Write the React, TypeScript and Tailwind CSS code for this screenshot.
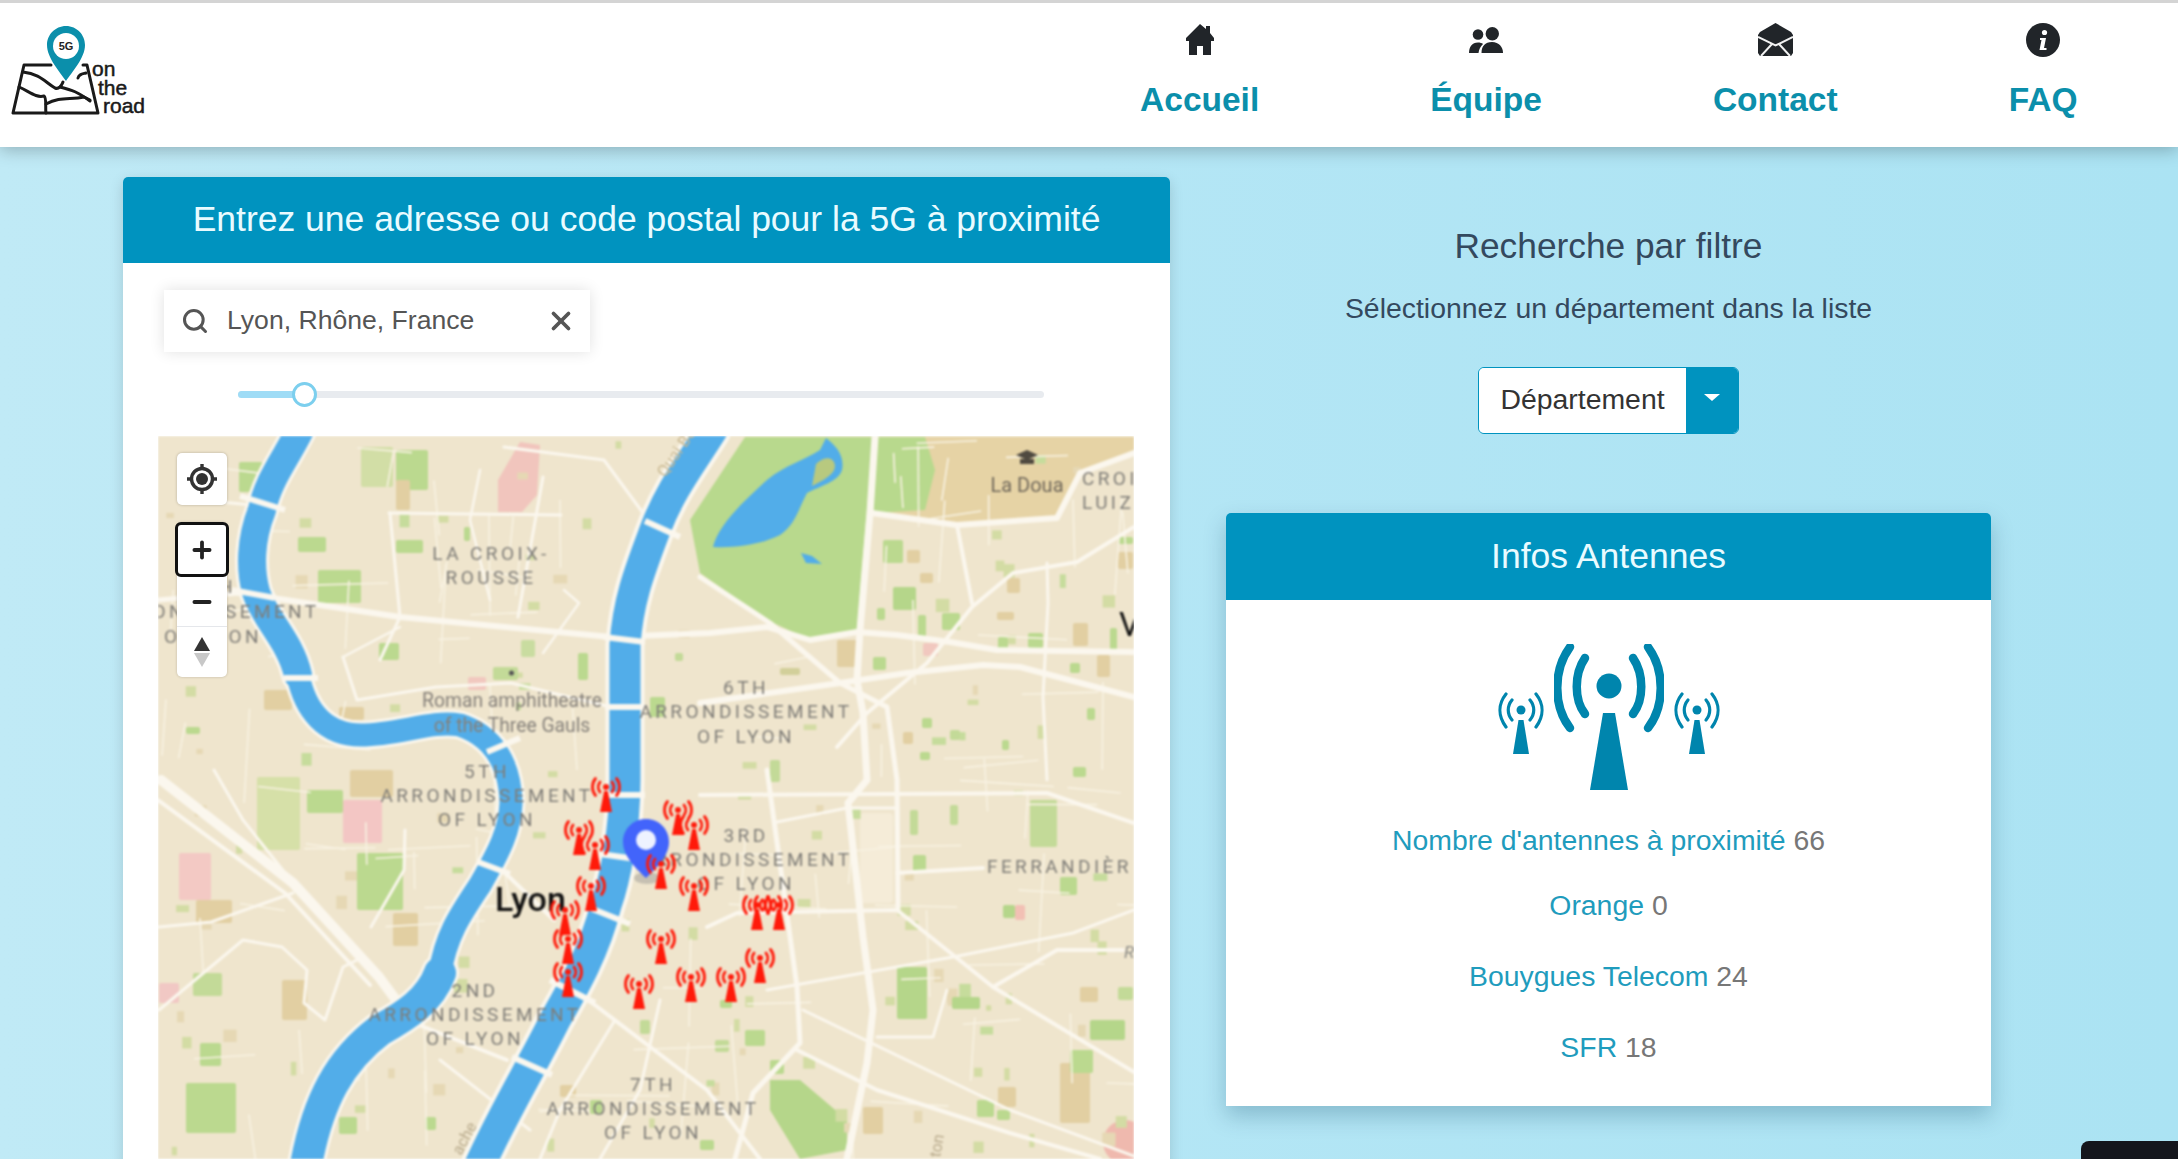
import React from 'react';
import { Minus, Plus, Search, X } from 'lucide-react';

const HomeIcon = () => (
  <svg viewBox="0 0 28 31" className="w-[28px] h-[31px]" fill="#212529">
    <path d="M14 0 L20 5 V2 H24 V9 L28 14 V17 H25 V31 H17 V22 H11 V31 H3 V17 H0 V14 Z" />
  </svg>
);

const UsersIcon = () => (
  <svg viewBox="0 0 34 26" className="w-[34px] h-[26px]" fill="#212529">
    <circle cx="23.3" cy="6.7" r="6.7" />
    <circle cx="9" cy="7.5" r="5.3" />
    <path d="M12.5 26 C12.5 19 16 15 23 15 C30 15 34 20 34 26 Z" />
    <path d="M0 26 C0 20 3 15.5 9 15.5 C11 15.5 13 16 14 17 C11.5 19.5 10 22 9.5 26 Z" />
  </svg>
);

const EnvelopeIcon = () => (
  <svg viewBox="0 0 35 33" className="w-[35px] h-[33px]">
    <path d="M17.5 0 L33 9 L35 12 V30 L33 33 H2 L0 30 V12 L2 9 Z" fill="#212529" />
    <path d="M0 14 L17.5 22.5 L35 14 M3 33 L14 21 M32 33 L21 21" fill="none" stroke="#f2f2f2" strokeWidth="2" />
  </svg>
);

const InfoIcon = () => (
  <svg viewBox="0 0 34 34" className="w-[34px] h-[34px]">
    <circle cx="17" cy="17" r="17" fill="#212529" />
    <circle cx="18.5" cy="9.5" r="2.6" fill="#fff" />
    <path d="M14 15 H20 L18 25 H20.5 V27 H13.5 L15.5 17 H14 Z" fill="#fff" />
  </svg>
);

const navItems = [
  { label: 'Accueil', icon: <HomeIcon /> },
  { label: 'Équipe', icon: <UsersIcon /> },
  { label: 'Contact', icon: <EnvelopeIcon /> },
  { label: 'FAQ', icon: <InfoIcon /> },
];

const counts = [
  { label: "Nombre d'antennes à proximité", value: 66, className: 'mt-[30px]' },
  { label: 'Orange', value: 0, className: 'mt-[25px]' },
  { label: 'Bouygues Telecom', value: 24, className: 'mt-[31px]' },
  { label: 'SFR', value: 18, className: 'mt-[31px]' },
];

// map data, x/y are page pixels (see the viewBox on the svg)
const roads: [string, number][] = [
  ['M239 593 L400 617 L611 637 L710 633 L767 627 L810 640 L857 632 L897 635 L950 642 L997 650 L1134 652', 6],
  ['M700 703 L840 683 L907 673 L983 665 L1020 667 L1134 697', 6],
  ['M875 437 L870 513 L860 630 L857 680 L863 713 L867 780 L848 803 L863 937 L873 1010 L867 1063 L847 1159', 7],
  ['M872 513 L957 525 L1057 518 L1080 473 L1134 453', 6],
  ['M957 525 L972 603', 4],
  ['M1134 527 L1077 562 L1013 573 L972 607 L927 663 L867 713 L837 747', 4],
  ['M1047 563 L1048 603 L1043 697 L1047 780', 3],
  ['M700 577 L770 623 L840 683 L887 707 L897 780 L898 910', 5],
  ['M700 795 L1047 793 L1134 823', 4],
  ['M897 873 L983 868', 4],
  ['M707 927 L737 913 L897 910 L993 987 L1134 1072', 4],
  ['M767 770 L797 987 L800 1043 L753 1093 L735 1159', 5],
  ['M767 990 L953 957 L1073 933 L1134 910', 3],
  ['M993 987 L1057 950 L1123 950', 4],
  ['M797 1050 L877 1090 L1010 1133 L1100 1159', 4],
  ['M803 1010 L1010 1110 L1134 1156', 3],
  ['M947 990 L933 1037 L877 1037', 3],
  ['M777 822 L847 808 L897 808', 3],
  ['M161 780 L293 883 L379 977 L396 1000', 10],
  ['M158 800 L285 893 L370 985', 4],
  ['M159 927 L211 922 L293 893', 3],
  ['M159 1010 L243 940 L282 947 L307 970 L304 1003 L325 1020 L343 967 L357 960', 3],
  ['M371 927 L404 870 L405 830', 3],
  ['M214 770 L243 820 L293 883', 3],
  ['M414 1023 L507 1060', 4],
  ['M504 872 L554 920', 4],
  ['M579 993 L707 1090 L760 1159', 4],
  ['M504 447 L604 460 L643 513', 3],
  ['M389 513 L561 515', 3],
  ['M390 513 L400 617 L380 660', 3],
  ['M543 477 L518 617', 3],
  ['M480 470 L470 520 L490 600', 2.5],
  ['M343 657 L400 627', 2.5],
  ['M343 657 L357 700 L436 687 L511 683 L611 707', 3],
  ['M564 590 L579 603 L543 653', 2.5],
  ['M158 600 L239 593', 5],
  ['M200 500 L252 505', 3],
  ['M660 1000 L640 1090 L600 1159', 3],
  ['M615 1020 L560 1110 L540 1159', 3],
  ['M440 1060 L530 1130', 3],
];

// faint street grid and small blocks, same result on every render
const hash = (n: number) => {
  const v = Math.sin(n * 127.1) * 43758.5453;
  return v - Math.floor(v);
};

const inWater = (x: number, y: number) => {
  if (x > 700 && x < 880 && y < 640) return true;
  const rhone = y < 640 ? 712 - (y - 430) * 0.42 : y < 800 ? 625 : 625 - (y - 800) * 0.4;
  return Math.abs(x - rhone) < 35;
};

const streets = Array.from({ length: 150 }, (_, i) => {
  const x = 160 + hash(i + 1) * 970;
  const y = 440 + hash(i + 500) * 715;
  const len = 30 + hash(i + 900) * 70;
  const flat = i % 2 === 0;
  const tilt = (hash(i + 1300) - 0.5) * 16;
  return { x, y, x2: flat ? x + len : x + tilt, y2: flat ? y + tilt : y + len };
}).filter((s) => !inWater(s.x, s.y) && !inWater(s.x2, s.y2));

const blocks = Array.from({ length: 120 }, (_, i) => {
  const x = 160 + hash(i + 2000) * 970;
  const y = 440 + hash(i + 2500) * 715;
  const tint = hash(i + 3000);
  return {
    x,
    y,
    w: 5 + hash(i + 3500) * 9,
    h: 5 + hash(i + 4000) * 9,
    fill: tint < 0.5 ? '#d3dca4' : tint < 0.85 ? '#e6d8b4' : '#c6dc9c',
  };
}).filter((b) => !inWater(b.x, b.y));

// [x, y, w, h, fill]
const patches: [number, number, number, number, string][] = [
  [239, 462, 24, 30, '#bbd98f'], [361, 447, 32, 40, '#d2dea6'], [396, 450, 32, 40, '#bbd98f'], [396, 480, 14, 30, '#e2cfa2'],
  [298, 537, 28, 15, '#bbd98f'], [396, 540, 27, 13, '#bbd98f'], [318, 570, 43, 33, '#bbd98f'], [379, 643, 20, 17, '#bbd98f'],
  [464, 527, 6, 14, '#bbd98f'], [521, 640, 14, 17, '#c9dca0'], [578, 653, 10, 27, '#bbd98f'], [493, 667, 25, 13, '#c3da98'],
  [468, 677, 18, 13, '#f1c8bf'], [650, 697, 15, 20, '#bbd98f'], [675, 653, 8, 8, '#c3da98'], [339, 707, 25, 13, '#e2cfa2'],
  [264, 690, 28, 20, '#e2cfa2'], [186, 727, 14, 7, '#bbd98f'], [257, 777, 43, 73, '#d6e0a8'], [307, 790, 36, 23, '#bbd98f'],
  [343, 800, 39, 43, '#f3c6c4'], [357, 853, 46, 57, '#bbd98f'], [350, 770, 43, 27, '#e2cfa2'], [179, 853, 32, 47, '#f3c9c4'],
  [196, 900, 36, 23, '#e2cfa2'], [393, 913, 25, 33, '#e2cfa2'], [282, 980, 25, 40, '#e2cfa2'], [193, 973, 29, 23, '#c3da98'],
  [200, 1043, 21, 23, '#bbd98f'], [186, 1083, 50, 50, '#bbd98f'], [339, 1117, 18, 17, '#bbd98f'], [425, 1117, 11, 13, '#bbd98f'],
  [159, 983, 20, 20, '#f1c8c4'], [897, 967, 30, 52, '#b5d68a'], [977, 1100, 17, 17, '#bbd98f'], [997, 1110, 13, 10, '#bbd98f'],
  [998, 1087, 18, 20, '#e2cfa2'], [1060, 1063, 30, 60, '#e2cfa2'], [1090, 1020, 35, 20, '#b5d68a'], [1070, 1050, 23, 23, '#bbd98f'],
  [1030, 800, 27, 47, '#c3da98'], [913, 855, 13, 18, '#bbd98f'], [1060, 877, 17, 18, '#bbd98f'], [1003, 905, 12, 13, '#b5d68a'],
  [1015, 905, 10, 15, '#f2c0b4'], [952, 997, 28, 12, '#b5d68a'], [1118, 987, 15, 13, '#c3da98'], [1080, 987, 18, 15, '#e2cfa2'],
  [863, 1107, 20, 27, '#e2cfa2'], [883, 540, 20, 23, '#bbd98f'], [893, 587, 23, 23, '#b5d68a'], [907, 550, 13, 13, '#e2cfa2'],
  [920, 573, 13, 10, '#e2cfa2'], [877, 608, 8, 12, '#bbd98f'], [918, 615, 8, 22, '#bbd98f'], [942, 613, 18, 17, '#bbd98f'],
  [998, 637, 10, 12, '#bbd98f'], [1028, 633, 15, 15, '#bbd98f'], [1073, 623, 15, 23, '#e2cfa2'], [1110, 628, 7, 22, '#bbd98f'],
  [1097, 655, 13, 22, '#e2cfa2'], [1070, 663, 10, 10, '#bbd98f'], [1118, 537, 15, 7, '#bbd98f'], [1118, 552, 15, 17, '#e2cfa2'],
  [837, 640, 20, 27, '#e2cfa2'], [873, 657, 13, 13, '#bbd98f'], [780, 668, 20, 7, '#d2cf9a'], [922, 718, 10, 10, '#bbd98f'],
  [903, 732, 10, 12, '#e2cfa2'], [950, 730, 10, 10, '#c3da98'], [1002, 740, 7, 10, '#bbd98f'], [1087, 708, 8, 12, '#bbd98f'],
  [920, 752, 10, 8, '#bbd98f'], [1073, 767, 13, 10, '#bbd98f'], [923, 643, 15, 13, '#f1c8bf'], [1007, 578, 13, 15, '#e2cfa2'],
  [997, 612, 17, 8, '#e2cfa2'], [770, 760, 10, 22, '#c3da98'], [910, 810, 8, 25, '#c3da98'], [950, 805, 8, 20, '#c3da98'],
  [745, 1030, 20, 16, '#bbd98f'], [770, 1060, 14, 14, '#bbd98f'], [715, 1040, 14, 12, '#c3da98'], [560, 1085, 16, 12, '#e2cfa2'],
  [590, 1100, 12, 14, '#bbd98f'], [640, 1020, 10, 14, '#c3da98'], [720, 1000, 12, 8, '#bbd98f'], [700, 1140, 14, 10, '#bbd98f'],
];

const antennas = [
  [606, 787], [678, 810], [694, 825], [579, 830], [595, 845], [694, 886], [591, 886], [565, 910], [757, 905],
  [779, 905], [568, 939], [661, 939], [760, 958], [568, 972], [691, 977], [731, 977], [639, 984],
];

// text centred on x: [text, x, y]
const districtLabels: [string, number, number][] = [
  ['LA CROIX-', 491, 560], ['ROUSSE', 491, 584],
  ['9TH', 213, 593], ['ARRONDISSEMENT', 213, 618], ['OF LYON', 213, 643],
  ['6TH', 746, 694], ['ARRONDISSEMENT', 746, 718], ['OF LYON', 746, 743],
  ['5TH', 487, 778], ['ARRONDISSEMENT', 487, 802], ['OF LYON', 487, 826],
  ['3RD', 746, 842], ['ARRONDISSEMENT', 746, 866], ['OF LYON', 746, 890],
  ['2ND', 475, 997], ['ARRONDISSEMENT', 475, 1021], ['OF LYON', 475, 1045],
  ['7TH', 653, 1091], ['ARRONDISSEMENT', 653, 1115], ['OF LYON', 653, 1139],
];

const Antenna = ({ x, y, tower = true }: { x: number; y: number; tower?: boolean }) => (
  <g transform={`translate(${x} ${y})`} fill="none" stroke="#ff1a0a" strokeWidth="2.8" strokeLinecap="round">
    {tower && <circle r="3" fill="#ff1a0a" stroke="none" />}
    <path d="M-6 -5 A8 8 0 0 0 -6 5 M6 -5 A8 8 0 0 1 6 5" />
    <path d="M-10.5 -8.5 A13.5 13.5 0 0 0 -10.5 8.5 M10.5 -8.5 A13.5 13.5 0 0 1 10.5 8.5" />
    {tower && <path d="M-1.8 4 L1.8 4 L6 25 L-6 25 Z" fill="#ff1a0a" stroke="none" />}
  </g>
);

const saoneTop = 'M300 430 C285 460 268 480 262 510 C250 540 250 570 256 592 C265 620 290 640 298 675';
const saoneMid = 'M298 675 C305 710 325 735 361 735 C400 735 430 720 460 725 C490 735 510 760 511 803 C510 830 500 850 480 885 C460 915 446 935 440 973';
const saoneLow = 'M440 973 C430 1000 407 1015 380 1030 C340 1060 318 1100 306 1165';
const rhone = 'M712 430 C690 465 670 490 655 530 C640 570 628 600 625 645 L625 780 C625 830 615 880 606 905 C595 950 575 985 555 1020 C530 1070 505 1110 480 1165';

const CityMap = () => (
  <svg viewBox="158 436 976 723" className="block w-full h-full blur-[0.8px]" fontFamily="Roboto, sans-serif">
    <rect x="158" y="436" width="976" height="723" fill="#efe5cd" />
    {/* parks */}
    <path d="M745 437 L873 437 L857 630 L810 640 L767 620 L700 573 L690 520 Z" fill="#b8d98d" />
    <path d="M877 437 L1134 437 L1134 450 L1080 473 L1057 517 L957 525 L873 513 Z" fill="#e6d3a5" />
    <path d="M878 437 L925 437 L935 470 L925 510 L873 513 Z" fill="#b8d98d" />
    <path d="M498 480 L520 442 L540 445 L537 495 L522 512 L498 512 Z" fill="#f1c5bd" />
    <path d="M770 1080 L800 1080 L847 1120 L847 1150 L800 1159 L770 1110 Z" fill="#b5d68a" />
    <circle cx="1125" cy="1142" r="22" fill="#efb9ae" />
    <rect x="860" y="813" width="33" height="90" rx="4" fill="#f5ecd8" />
    {blocks.map((b, i) => (
      <rect key={i} x={b.x} y={b.y} width={b.w} height={b.h} fill={b.fill} />
    ))}
    {patches.map(([x, y, w, h, fill], i) => (
      <rect key={i} x={x} y={y} width={w} height={h} rx="2" fill={fill} />
    ))}
    {streets.map((s, i) => (
      <line key={i} x1={s.x} y1={s.y} x2={s.x2} y2={s.y2} stroke="#f8f2e2" strokeWidth="1.6" />
    ))}
    {roads.map(([d, w], i) => (
      <path key={i} d={d} fill="none" stroke="#fbf7ee" strokeWidth={w} strokeLinejoin="round" strokeLinecap="round" />
    ))}
    {/* lake */}
    <path d="M713 547 C718 525 745 500 767 480 C785 465 805 460 820 450 L826 438 C835 445 845 455 842 470 C838 482 820 486 807 493 C798 510 795 525 780 535 C760 545 735 548 713 547 Z" fill="#52ade9" />
    <path d="M816 464 C824 456 834 456 835 466 C835 474 824 480 812 486 Z" fill="#b8c97f" />
    <path d="M801 553 L812 556 L822 564 L806 563 Z" fill="#52ade9" />
    {/* Saône and Rhône */}
    <g fill="none" strokeLinejoin="round" strokeLinecap="round">
      <path d={saoneTop} stroke="#fbf7ee" strokeWidth="34" />
      <path d={saoneMid} stroke="#fbf7ee" strokeWidth="29" />
      <path d={saoneLow} stroke="#fbf7ee" strokeWidth="38" />
      <path d={rhone} stroke="#fbf7ee" strokeWidth="39" />
      <path d={saoneTop} stroke="#52ade9" strokeWidth="28" />
      <path d={saoneMid} stroke="#52ade9" strokeWidth="23" />
      <path d={saoneLow} stroke="#52ade9" strokeWidth="32" />
      <path d={rhone} stroke="#52ade9" strokeWidth="31" />
    </g>
    {/* bridges */}
    <path
      d="M240 496 L285 510 M232 590 L275 598 M284 678 L318 678 M487 752 L520 738 M478 862 L510 874 M645 521 L680 537 M604 637 L645 642 M605 707 L645 707 M605 795 L645 795 M600 854 L636 859 M590 908 L630 924 M550 980 L595 1003 M512 1057 L552 1075"
      fill="none"
      stroke="#fbf7ee"
      strokeWidth="6"
    />
    {/* labels */}
    <g fill="#7f7d78" fontSize="19" letterSpacing="3.4" textAnchor="middle">
      {districtLabels.map(([t, x, y], i) => (
        <text key={i} x={x} y={y}>{t}</text>
      ))}
    </g>
    <text x="987" y="873" fill="#7f7d78" fontSize="19" letterSpacing="3.4">FERRANDIÈR</text>
    <text x="1082" y="485" fill="#7f7d78" fontSize="19" letterSpacing="3.4">CROI</text>
    <text x="1082" y="509" fill="#7f7d78" fontSize="19" letterSpacing="3.4">LUIZ</text>
    <g fill="#85807a" fontSize="19.3" textAnchor="middle">
      <text x="512" y="707">Roman amphitheatre</text>
      <text x="512" y="732">of the Three Gauls</text>
    </g>
    <text x="1027" y="492" fill="#6f675a" fontSize="20" textAnchor="middle">La Doua</text>
    <path d="M1027 450 L1038 455 L1027 460 L1016 455 Z M1020 459 L1034 459 L1034 464 L1020 464 Z" fill="#4f4a40" />
    <circle cx="511.5" cy="673" r="2.5" fill="#555" />
    <text x="1119" y="636" fill="#111" fontSize="33">V</text>
    <text x="495" y="911" fill="#111" fontSize="34" fontWeight="500">Lyon</text>
    <text x="1124" y="958" fill="#8a8a86" fontSize="17" fontStyle="italic">R</text>
    <text x="665" y="478" fill="#c7b68e" fontSize="16" transform="rotate(-55 665 478)">Quai Bel</text>
    <text x="461" y="1156" fill="#b9ab8d" fontSize="16" transform="rotate(-62 461 1156)">ache</text>
    <text x="940" y="1158" fill="#b9ab8d" fontSize="16" transform="rotate(-80 940 1158)">ton</text>
    {/* marker */}
    <ellipse cx="647" cy="878" rx="13" ry="6" fill="#8a8a8a" opacity="0.4" />
    <path d="M646 819 C633 819 623 829 623 842 C623 858 640 872 646 878 C652 872 669 858 669 842 C669 829 659 819 646 819 Z" fill="#4264fb" />
    <circle cx="646" cy="840" r="10" fill="#eef2ff" />
    {antennas.map(([x, y], i) => (
      <Antenna key={i} x={x} y={y} />
    ))}
    <Antenna x={768} y={905} tower={false} />
    <Antenna x={661} y={864} />
  </svg>
);

const MapControls = () => (
  <div className="absolute left-[19px] top-[17px] flex flex-col items-center w-[50px] text-[#222]">
    <div className="w-[50px] h-[52px] bg-white rounded-[5px] shadow-[0_0_3px_rgba(0,0,0,0.25)] flex items-center justify-center">
      <svg viewBox="0 0 32 32" className="w-[32px] h-[32px]" fill="none" stroke="#333" strokeWidth="3.4">
        <circle cx="16" cy="16" r="10.5" />
        <circle cx="16" cy="16" r="6" fill="#333" stroke="none" />
        <path d="M16 1 V5 M16 27 V31 M1 16 H5 M27 16 H31" />
      </svg>
    </div>
    <div className="mt-[17px] w-[50px] bg-white rounded-[5px] shadow-[0_0_3px_rgba(0,0,0,0.2)] flex flex-col items-center">
      <div className="w-[54px] h-[55px] bg-white border-[3px] border-[#111] rounded-[6px] flex items-center justify-center">
        <Plus className="w-[26px] h-[26px]" strokeWidth={3.5} />
      </div>
      <div className="w-full h-[50px] border-b border-gray-200 flex items-center justify-center">
        <Minus className="w-[26px] h-[26px]" strokeWidth={3.5} />
      </div>
      <div className="h-[50px] flex items-center justify-center">
        <svg viewBox="0 0 20 34" className="w-[20px] h-[38px]">
          <path d="M10 2 L18 16 H2 Z" fill="#333" />
          <path d="M10 32 L18 18 H2 Z" fill="#c8c8c8" />
        </svg>
      </div>
    </div>
  </div>
);

const Logo = () => (
  <svg viewBox="0 3 160 125" className="w-[160px] h-[125px]" fontFamily="'Liberation Sans', sans-serif">
    <g fill="none" stroke="#1a1a1a" strokeWidth="3" strokeLinejoin="round" strokeLinecap="round">
      <path d="M51 65 H24 L13 113 H98 L87 65 H83" />
      <path d="M78 78 C79 74 82 74 86 73" />
      <path d="M23 72 C40 74 45 82 55 88 C60 90 62 84 63 82" />
      <path d="M19 87 C30 92 36 98 44 96 C47 98 45 108 46 113" />
      <path d="M46 104 C60 96 70 100 84 97 L90 100" />
      <path d="M60 87 C72 90 78 92 90 101" />
    </g>
    <path d="M66 26 C55 26 47 35 47 45 C47 58 60 72 66 81 C72 72 85 58 85 45 C85 35 77 26 66 26 Z" fill="#0b8fab" />
    <circle cx="66" cy="46" r="13" fill="#fff" />
    <text x="66" y="50" fontSize="11" fontWeight="700" textAnchor="middle" fill="#222">5G</text>
    <g fontSize="21" fill="#1a1a1a" stroke="#1a1a1a" strokeWidth="0.5">
      <text x="92" y="76">on</text>
      <text x="98" y="95">the</text>
      <text x="103" y="113">road</text>
    </g>
  </svg>
);

const TowerIcon = ({ big }: { big?: boolean }) =>
  big ? (
    <svg viewBox="0 0 110 146" className="w-[110px] h-[146px]" fill="none" stroke="#0085ad" strokeLinecap="round">
      <circle cx="55" cy="42" r="12.5" fill="#0085ad" stroke="none" />
      <path d="M31 14 C20 30 20 56 31 70 M79 14 C90 30 90 56 79 70" strokeWidth="8.5" />
      <path d="M16 3 C-1 26 -1 62 16 84 M94 3 C111 26 111 62 94 84" strokeWidth="8.5" />
      <path d="M49 69 H61 L74 146 H36 Z" fill="#0085ad" stroke="none" />
    </svg>
  ) : (
    <svg viewBox="0 0 48 62" className="w-[48px] h-[62px]" fill="none" stroke="#0085ad" strokeLinecap="round">
      <circle cx="24" cy="18" r="4.5" fill="#0085ad" stroke="none" />
      <path d="M15 8 C10 14 10 22 15 28 M33 8 C38 14 38 22 33 28" strokeWidth="3.2" />
      <path d="M9 2 C1 12 1 24 9 35 M39 2 C47 12 47 24 39 35" strokeWidth="3.2" />
      <path d="M21.5 28 H26.5 L32 62 H16 Z" fill="#0085ad" stroke="none" />
    </svg>
  );

export default function App() {
  return (
    <div className="relative h-[1159px] overflow-hidden bg-gradient-to-r from-[#c0eaf6] via-[#b4e6f5] to-[#abe3f3] font-['Liberation_Sans',Arial,sans-serif]">
      <header className="relative z-10 h-[147px] bg-white border-t-[3px] border-[#d4d4d4] shadow-[0_3px_16px_rgba(0,0,0,0.25)] flex items-start justify-between">
        <Logo />
        <nav className="flex pr-[15px]">
          {navItems.map((item) => (
            <a key={item.label} className="px-[85.5px] flex flex-col items-center">
              <span className="h-[73px] flex items-center">{item.icon}</span>
              <span className="text-[33.5px] leading-[48px] font-bold text-[#0b8fab]">{item.label}</span>
            </a>
          ))}
        </nav>
      </header>

      <main className="flex items-start pt-[30px] pl-[123px]">
        <section className="w-[1047px] h-[1000px] bg-white shadow-[0_4px_14px_rgba(0,0,0,0.15)] rounded-t-[5px]">
          <h2 className="h-[86px] rounded-t-[5px] bg-[#0093bf] flex items-center justify-center text-[35.5px] text-[#e9fbff]">
            Entrez une adresse ou code postal pour la 5G à proximité
          </h2>
          <div className="pl-[41px] pt-[27px]">
            <div className="w-[426px] h-[62px] bg-white shadow-[0_0_14px_rgba(0,0,0,0.12)] flex items-center text-[#555]">
              <Search className="ml-[17px] w-[28px] h-[28px]" strokeWidth={2.6} />
              <span className="ml-[18px] text-[26.6px] flex-1">Lyon, Rhône, France</span>
              <X className="mr-[14px] w-[30px] h-[30px]" strokeWidth={3} />
            </div>
          </div>
          <div className="relative ml-[115px] mt-[39px] w-[806px] h-[7px] rounded-full bg-[#e8ebef]">
            <div className="h-full w-[66px] rounded-l-full bg-[#9fdcf6]" />
            <div className="absolute left-[54px] top-[-9px] w-[25px] h-[25px] rounded-full bg-white border-[3px] border-[#7ccfee]" />
          </div>
          <div className="relative ml-[35px] mt-[38px] w-[976px] h-[723px] overflow-hidden">
            <CityMap />
            <MapControls />
          </div>
        </section>

        <aside className="ml-[56px] w-[765px] flex flex-col items-center">
          <h3 className="mt-[46px] text-[35.3px] leading-[46px] text-[#34495e]">Recherche par filtre</h3>
          <p className="mt-[19px] text-[28.4px] leading-[40px] text-[#34495e]">Sélectionnez un département dans la liste</p>
          <div className="mt-[39px] w-[261px] h-[67px] flex rounded-[6px] overflow-hidden border border-[#0093bf]">
            <span className="w-[207px] pb-[3px] bg-white flex items-center justify-center text-[28.4px] text-[#333]">Département</span>
            <span className="flex-1 bg-[#0093bf] flex items-start justify-center pt-[26px]">
              <span className="w-0 h-0 border-x-[8px] border-x-transparent border-t-[7px] border-t-white" />
            </span>
          </div>
          <div className="mt-[79px] w-full rounded-t-[5px] shadow-[0_10px_22px_rgba(0,60,90,0.25)]">
            <h2 className="h-[87px] rounded-t-[5px] bg-[#0093bf] flex items-center justify-center text-[35.5px] text-[#e9fbff]">
              Infos Antennes
            </h2>
            <div className="h-[506px] bg-white flex flex-col items-center pt-[44px] text-[28.4px] leading-[40px]">
              <div className="flex items-end gap-[9px]">
                <div className="mb-[36px]"><TowerIcon /></div>
                <TowerIcon big />
                <div className="mb-[36px]"><TowerIcon /></div>
              </div>
              {counts.map((c) => (
                <p key={c.label} className={c.className}>
                  <span className="text-[#1f9cbd]">{c.label}</span> <span className="text-[#777]">{c.value}</span>
                </p>
              ))}
            </div>
          </div>
        </aside>
      </main>

      <div className="absolute right-0 bottom-0 w-[97px] h-[18px] rounded-tl-[8px] bg-[#14161c]" />
    </div>
  );
}
